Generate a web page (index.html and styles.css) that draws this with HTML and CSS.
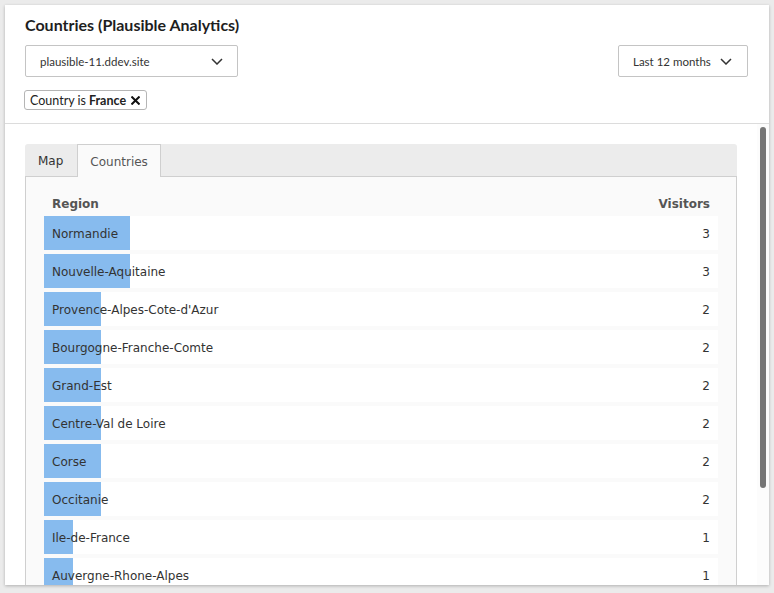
FILE: index.html
```html
<!DOCTYPE html>
<html lang="en">
<head>
<meta charset="utf-8">
<title>Countries (Plausible Analytics)</title>
<link rel="stylesheet" href="styles.css">
</head>
<body>
<div class="panel">
  <div class="header">
    <h1 class="title">Countries (Plausible Analytics)</h1>
    <div class="controls">
      <div class="select site">
        <span>plausible-11.ddev.site</span>
        <svg class="chev" width="12" height="7" viewBox="0 0 12 7"><polyline points="1,1 6,6 11,1" fill="none" stroke="#333" stroke-width="1.5"/></svg>
      </div>
      <div class="select period">
        <span>Last 12 months</span>
        <svg class="chev" width="12" height="7" viewBox="0 0 12 7"><polyline points="1,1 6,6 11,1" fill="none" stroke="#333" stroke-width="1.5"/></svg>
      </div>
    </div>
    <div class="chip">Country is <b>France</b><svg class="x" width="9" height="9" viewBox="0 0 9 9"><path d="M1.2 1.2 L7.8 7.8 M7.8 1.2 L1.2 7.8" stroke="#111" stroke-width="2" stroke-linecap="square" fill="none"/></svg></div>
  </div>
  <div class="scroll">
    <div class="content">
      <div class="tabs">
        <div class="tabbar">
          <div class="tab">Map</div>
          <div class="tab active">Countries</div>
        </div>
        <div class="tabcontent">
          <div class="thead"><span>Region</span><span>Visitors</span></div>
          <div class="rows">
            <div class="row" style="--w:86px"><span>Normandie</span><span>3</span></div>
            <div class="row" style="--w:86px"><span>Nouvelle-Aquitaine</span><span>3</span></div>
            <div class="row" style="--w:57px"><span>Provence-Alpes-Cote-d'Azur</span><span>2</span></div>
            <div class="row" style="--w:57px"><span>Bourgogne-Franche-Comte</span><span>2</span></div>
            <div class="row" style="--w:57px"><span>Grand-Est</span><span>2</span></div>
            <div class="row" style="--w:57px"><span>Centre-Val de Loire</span><span>2</span></div>
            <div class="row" style="--w:57px"><span>Corse</span><span>2</span></div>
            <div class="row" style="--w:57px"><span>Occitanie</span><span>2</span></div>
            <div class="row" style="--w:29px"><span>Ile-de-France</span><span>1</span></div>
            <div class="row" style="--w:29px"><span>Auvergne-Rhone-Alpes</span><span>1</span></div>
            <div class="row" style="--w:29px"><span>Hauts-de-France</span><span>1</span></div>
            <div class="row" style="--w:29px"><span>Bretagne</span><span>1</span></div>
          </div>
        </div>
      </div>
    </div>
    <div class="sbar"><div class="thumb"></div></div>
  </div>
</div>
</body>
</html>
```
FILE: styles.css
```css
html, body {
  margin: 0;
  padding: 0;
  background: #ebebeb;
}
body {
  padding: 5px;
  height: 593px;
  box-sizing: border-box;
}
.panel {
  width: 764px;
  height: 580px;
  background: #fff;
  box-shadow: 0 1px 3px rgba(0,0,0,0.25);
  display: flex;
  flex-direction: column;
  overflow: hidden;
}
.header {
  flex: none;
  padding: 10px 21px 13px 20px;
  border-bottom: 1px solid #dcdcdc;
  font-family: Lato, "Noto Sans", sans-serif;
  color: #222;
}
.title {
  margin: 0;
  font-size: 16px;
  line-height: 20px;
  font-weight: 700;
  color: #1e1e1e;
}
.controls {
  display: flex;
  justify-content: space-between;
  margin-top: 10px;
}
.select {
  height: 32px;
  box-sizing: border-box;
  border: 1px solid #c4c4c4;
  border-radius: 2px;
  display: flex;
  align-items: center;
  justify-content: space-between;
  padding: 0 14px;
  font-size: 11.5px;
  color: #333;
}
.site { width: 213px; }
.period { width: 130px; padding-right: 15px; }
.chev { display: block; }
.chip {
  display: inline-flex;
  align-items: center;
  margin-top: 13px;
  height: 20px;
  box-sizing: border-box;
  border: 1px solid #b5b5b5;
  border-radius: 3px;
  padding: 0 6px 0 5px;
  font-size: 12.5px;
  color: #222;
  margin-left: -1px;
}
.chip b { margin-left: 3px; font-weight: 700; }
.chip .x {
  display: block;
  margin-left: 5px;
}
.scroll {
  flex: 1;
  min-height: 0;
  display: flex;
  overflow: hidden;
}
.content {
  flex: 1;
  min-width: 0;
  overflow: hidden;
}
.sbar {
  flex: none;
  width: 12px;
  box-sizing: border-box;
  padding: 3px;
  background: #fcfcfc;
}
.thumb {
  height: 361px;
  border-radius: 3px;
  background: #767676;
}
.tabs {
  margin: 20px;
  font-family: "DejaVu Sans", Verdana, sans-serif;
  font-size: 12px;
  color: #333;
}
.tabbar {
  display: flex;
  height: 32px;
  background: #ececec;
  border-radius: 3px 3px 0 0;
  border-bottom: 1px solid #cfcfcf;
}
.tab {
  display: flex;
  align-items: center;
  padding: 1px 14px 0 13px;
  color: #333;
}
.tab.active {
  background: #fafafa;
  border: 1px solid #cfcfcf;
  border-bottom: none;
  margin-bottom: -1px;
  padding: 1px 12px 0;
  color: #555;
}
.tabcontent {
  background: #fafafa;
  border: 1px solid #cfcfcf;
  border-top: none;
  padding: 14px 18px 15px;
}
.thead {
  display: flex;
  justify-content: space-between;
  height: 25px;
  align-items: center;
  padding: 0 8px;
  font-weight: 700;
  color: #555;
}
.rows {
  display: flex;
  flex-direction: column;
  gap: 4px;
}
.row {
  display: flex;
  justify-content: space-between;
  align-items: center;
  height: 34px;
  box-sizing: border-box;
  padding: 2px 8px 0;
  background: linear-gradient(#87bbee, #87bbee) no-repeat left top / var(--w) 100%, #fff;
  color: #333;
}
```
